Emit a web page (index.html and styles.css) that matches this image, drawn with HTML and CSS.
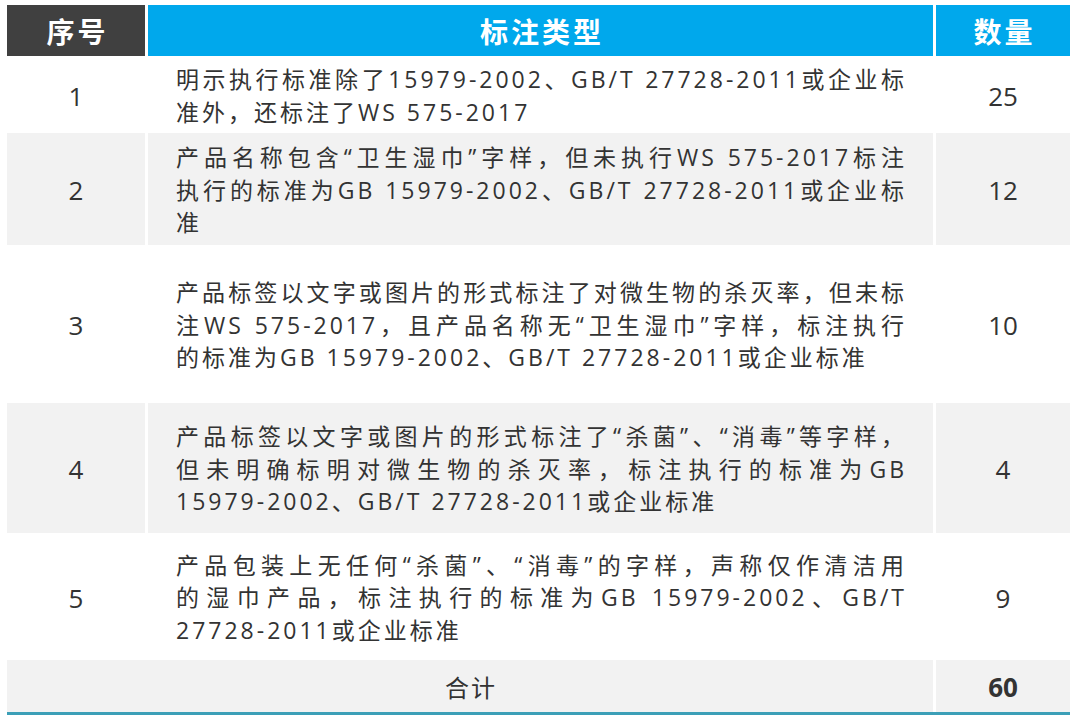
FILE: index.html
```html
<!DOCTYPE html>
<html lang="zh-CN">
<head>
<meta charset="utf-8">
<title>标注类型统计</title>
<link rel="stylesheet" href="styles.css">
</head>
<body>
<div class="sheet">
  <div class="grid">
    <div class="cell head dark">序号</div>
    <div class="cell head">标注类型</div>
    <div class="cell head">数量</div>

    <div class="cell num">1</div>
    <div class="cell txt"><div class="lines">
      <span class="ln">明示执行标准除了15979-2002、GB/T 27728-2011或企业标</span>
      <span class="ln">准外，还标注了WS 575-2017</span>
    </div></div>
    <div class="cell num">25</div>

    <div class="cell num g">2</div>
    <div class="cell txt g"><div class="lines">
      <span class="ln">产品名称包含“卫生湿巾”字样，但未执行WS 575-2017标注</span>
      <span class="ln">执行的标准为GB 15979-2002、GB/T 27728-2011或企业标</span>
      <span class="ln">准</span>
    </div></div>
    <div class="cell num g">12</div>

    <div class="cell num">3</div>
    <div class="cell txt"><div class="lines">
      <span class="ln">产品标签以文字或图片的形式标注了对微生物的杀灭率，但未标</span>
      <span class="ln">注WS 575-2017，且产品名称无“卫生湿巾”字样，标注执行</span>
      <span class="ln">的标准为GB 15979-2002、GB/T 27728-2011或企业标准</span>
    </div></div>
    <div class="cell num">10</div>

    <div class="cell num g">4</div>
    <div class="cell txt g"><div class="lines">
      <span class="ln">产品标签以文字或图片的形式标注了“杀菌”、“消毒”等字样，</span>
      <span class="ln">但未明确标明对微生物的杀灭率，标注执行的标准为GB</span>
      <span class="ln">15979-2002、GB/T 27728-2011或企业标准</span>
    </div></div>
    <div class="cell num g">4</div>

    <div class="cell num">5</div>
    <div class="cell txt"><div class="lines">
      <span class="ln">产品包装上无任何“杀菌”、“消毒”的字样，声称仅作清洁用</span>
      <span class="ln">的湿巾产品，标注执行的标准为GB 15979-2002、GB/T</span>
      <span class="ln">27728-2011或企业标准</span>
    </div></div>
    <div class="cell num">9</div>

    <div class="cell total g">合计</div>
    <div class="cell num sum g">60</div>
  </div>
</div>
</body>
</html>
```
FILE: styles.css
```css
html, body {
  margin: 0;
  padding: 0;
  background: #ffffff;
}

body {
  font-family: "Open Sans", "Noto Sans CJK SC", sans-serif;
  color: #333333;
}

.sheet {
  padding: 5px 0 0 7px;
}

.grid {
  display: grid;
  width: 1063px;
  grid-template-columns: 138px 785px 134px;
  grid-template-rows: 51px 77px 112px 158px 130px 127px 52px;
  column-gap: 3px;
  border-bottom: 3px solid #3c9fb7;
  box-shadow: 0 2px 0 0 #d4eff4;
}

.cell {
  display: flex;
  align-items: center;
  justify-content: center;
  background: #ffffff;
  box-sizing: border-box;
}

.g {
  background: #f2f2f2;
}

.head {
  background: #00a8ec;
  color: #ffffff;
  font-family: "Noto Sans CJK SC", sans-serif;
  font-weight: 700;
  font-size: 28px;
  letter-spacing: 3px;
  padding-left: 3px;
}

.head.dark {
  background: #404040;
}

.num {
  font-size: 26px;
  padding-top: 2px;
}

.sum {
  font-weight: 700;
}

.total {
  grid-column: span 2;
  font-family: "Noto Sans CJK SC", sans-serif;
  font-size: 24px;
  letter-spacing: 2px;
  padding-left: 2px;
}

.txt {
  justify-content: flex-start;
  padding: 2px 26px 0 28px;
}

.lines {
  width: 100%;
  font-size: 23px;
  letter-spacing: 3px;
  line-height: 32.5px;
}

.ln {
  display: block;
  text-align: justify;
  text-align-last: justify;
}

.ln:last-child {
  text-align-last: left;
}
```
